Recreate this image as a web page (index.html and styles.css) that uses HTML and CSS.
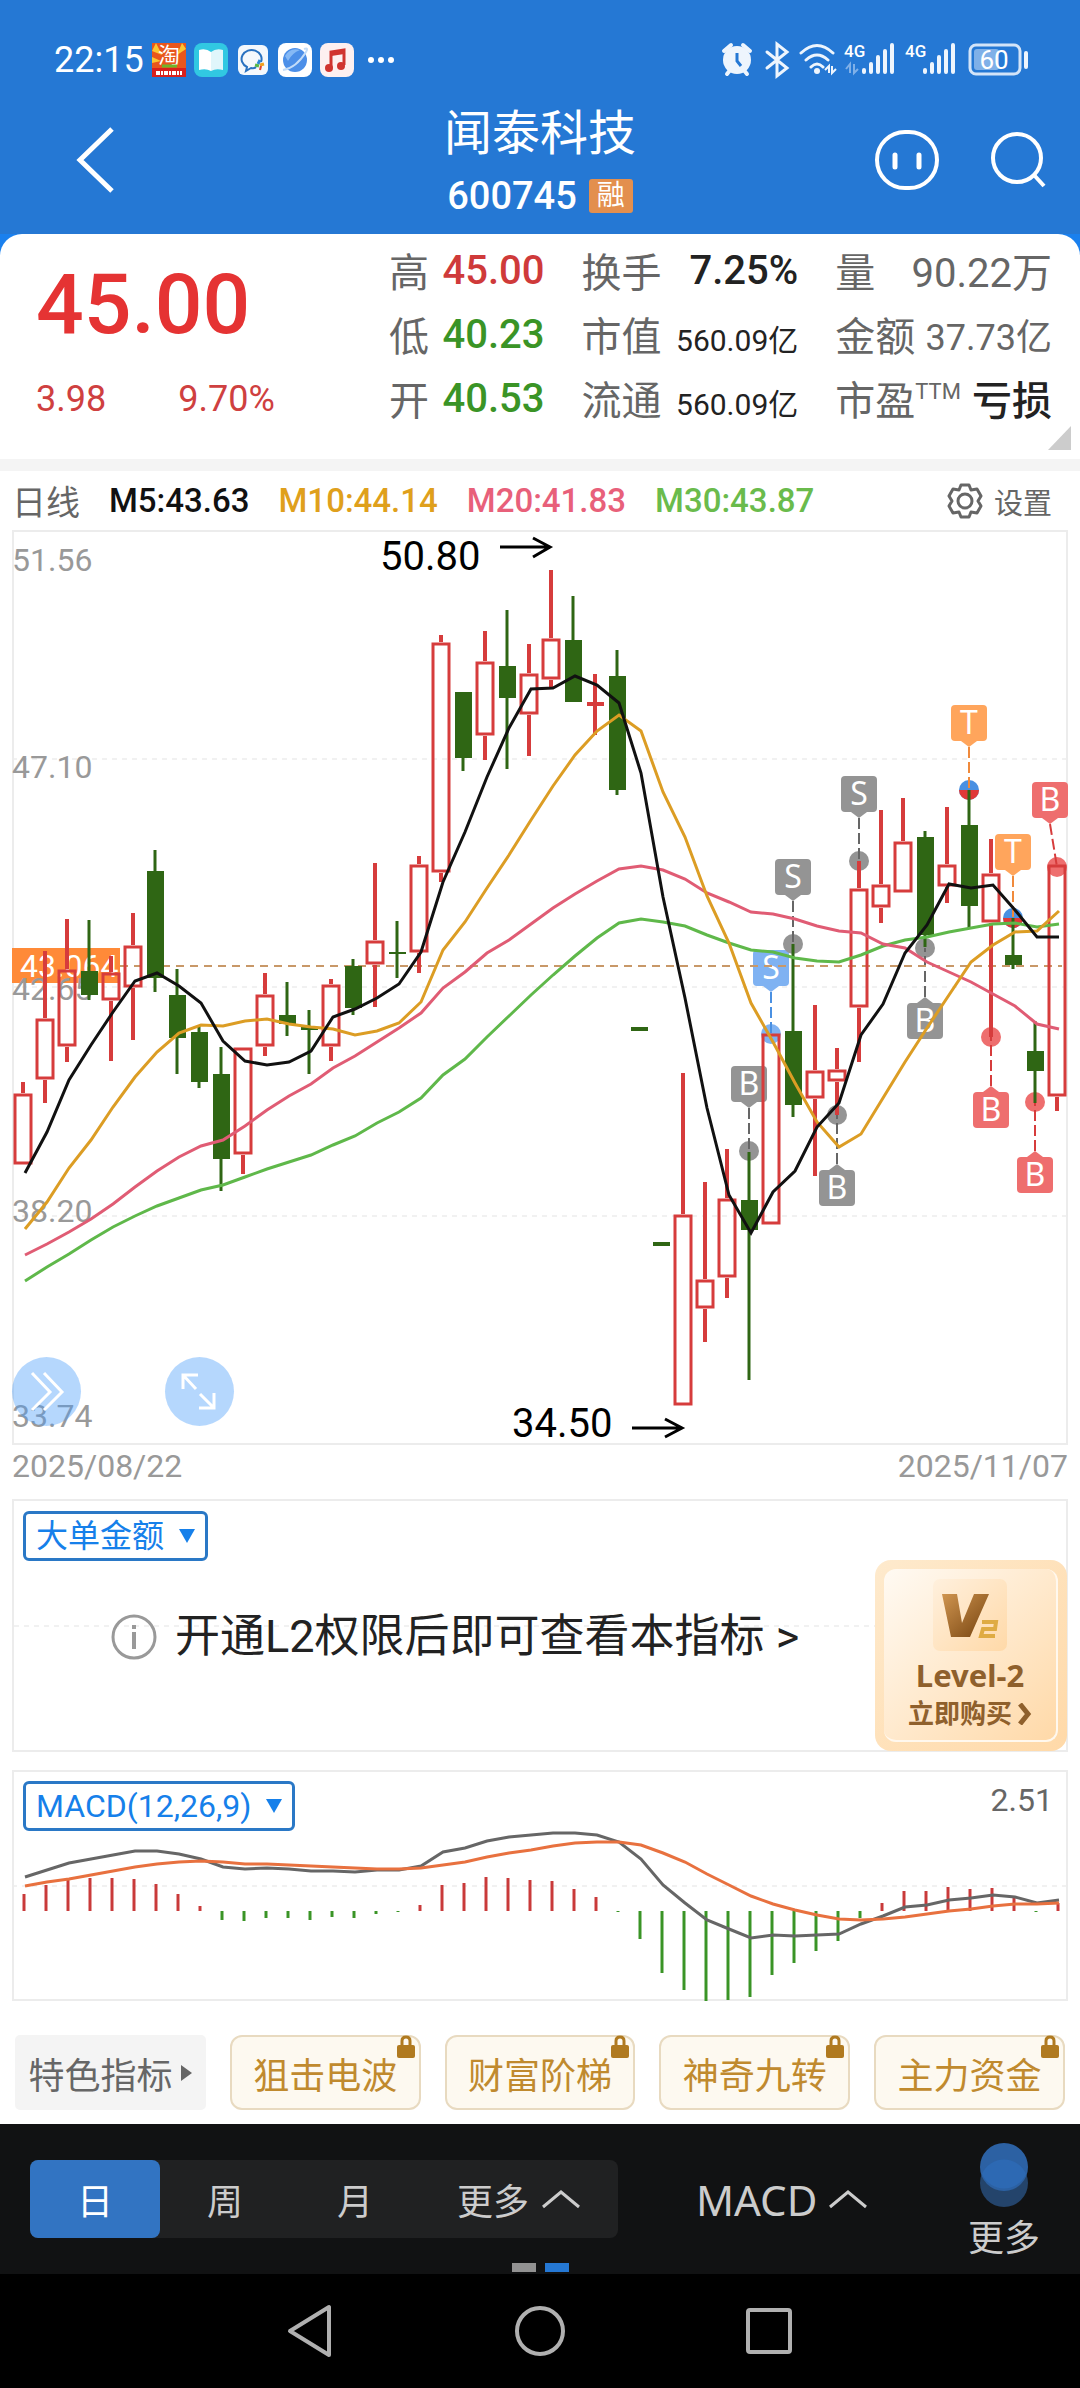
FILE: index.html
```html
<!DOCTYPE html>
<html lang="zh-CN">

<head>
  <meta charset="UTF-8" />
  <meta name="viewport" content="width=device-width, initial-scale=1.0" />
  <title>闻泰科技 600745</title>
  <link rel="stylesheet" href="styles.css">
</head>

<body>
  <header class="header">
    <!-- 状态栏 -->
    <div class="status">
      <div class="status-left">
        <span class="time">22:15</span>
        <svg class="app-icon" viewBox="0 0 34 34">
          <rect width="34" height="34" fill="#e8561c" />
          <path d="M0 8L10 12L4 0ZM34 6L25 12L30 0ZM0 20L9 18L0 14Z" fill="#fbc531" />
          <rect y="25" width="34" height="9" fill="#d9201c" />
          <text x="17" y="20" text-anchor="middle" font-size="22" fill="#fff">淘</text>
          <path d="M10 23h15" stroke="#6fb52c" stroke-width="3" />
          <path d="M4 30h26" stroke="#fff" stroke-width="4" stroke-dasharray="4 1 2 1" />
        </svg>
        <svg class="app-icon" viewBox="0 0 34 34">
          <rect width="34" height="34" rx="8" fill="#31c8e2" />
          <path d="M5 7q7-2 12 2v19q-5-3-12-1z" fill="#fff" />
          <path d="M29 7q-7-2-12 2v19q5-3 12-1z" fill="#e0f6fb" />
        </svg>
        <svg class="app-icon" viewBox="0 0 34 34">
          <rect x="2" y="2" width="30" height="30" rx="6" fill="#f4f8fc" />
          <path d="M25 19A10 9 0 1 0 11 24L10 28L15 25Q18 26 20 24" fill="none" stroke="#2a72c0" stroke-width="2" />
          <path d="M24 17l-2 4" stroke="#2a86d8" stroke-width="3" />
          <path d="M28 21l-4 1" stroke="#f0a020" stroke-width="3" />
          <path d="M24 27l1-4" stroke="#e2462c" stroke-width="2" />
          <path d="M19 22l4 1" stroke="#57b847" stroke-width="3" />
        </svg>
        <svg class="app-icon" viewBox="0 0 34 34">
          <rect width="34" height="34" rx="8" fill="#fff" />
          <circle cx="17" cy="17" r="12" fill="#4c8fe8" />
          <path d="M7 13Q12 4 22 7Q14 10 10 18Z" fill="#86b9f5" />
          <path d="M5 27Q18 25 28 9Q31 4 26 6" fill="none" stroke="#c3dcf8" stroke-width="2" />
        </svg>
        <svg class="app-icon" viewBox="0 0 34 34">
          <rect width="34" height="34" rx="8" fill="#fdf0f0" />
          <path d="M11 25V9L24 7V22" fill="none" stroke="#d0342f" stroke-width="3" />
          <path d="M11 11L24 9" stroke="#d0342f" stroke-width="4" />
          <circle cx="9" cy="25" r="4" fill="#d0342f" />
          <circle cx="21" cy="23" r="4" fill="#d0342f" />
        </svg>
        <svg class="dots" viewBox="0 0 26 6">
          <circle cx="3" cy="3" r="3" /><circle cx="13" cy="3" r="3" /><circle cx="23" cy="3" r="3" />
        </svg>
      </div>
      <svg class="status-right" viewBox="720 40 312 40">
        <!-- 闹钟 -->
        <circle cx="737" cy="60" r="14" fill="#eef5fd" />
        <path d="M724 51L731 45M750 51L743 45M727 74L731 69M747 74L743 69" class="sl" />
        <path d="M737 53V61L741 66" fill="none" stroke="#2578d4" stroke-width="3" />
        <!-- 蓝牙 -->
        <path d="M767 52L787 68L777 76V44L787 52L767 68" class="sl thin" />
        <!-- wifi -->
        <path d="M801 53Q817 38 833 53M806 60Q817 50 828 60M811 67Q817 61 823 67" class="sl thin" />
        <circle cx="817" cy="71" r="3" fill="#eef5fd" />
        <path d="M829 73V66L825 70M832 66V73L836 69" fill="none" stroke="#eef5fd" stroke-width="2" />
        <!-- 信号 -->
        <g class="sim">
          <text x="844" y="57">4G</text>
          <text x="905" y="57">4G</text>
        </g>
        <path d="M850 73V64L846 69M854 64V73L858 69" fill="none" stroke="#7fb0e8" stroke-width="2" />
        <path d="M864 70V72M871 64V72M878 57V72M885 51V72M892 45V72M925 70V72M932 64V72M939 57V72M946 51V72M953 45V72" class="sl" />
        <!-- 电池 -->
        <rect x="970" y="45" width="50" height="29" rx="6" fill="none" stroke="#d3e4f8" stroke-width="3" />
        <rect x="974" y="49" width="25" height="21" rx="3" fill="#7fb0e8" />
        <path d="M1026 53V67" class="sl" />
        <text x="994" y="69" text-anchor="middle" font-size="26" fill="#fff">60</text>
      </svg>
    </div>

    <div class="title-bar">
      <button class="icon-btn back" aria-label="返回">
        <svg width="40" height="66" viewBox="0 0 40 66"><path d="M36 2L4 33L36 64" fill="none" stroke="#fff" stroke-width="5" /></svg>
      </button>
      <div class="title">
        <h1>闻泰科技</h1>
        <p><span>600745</span><i class="badge">融</i></p>
      </div>
      <div class="title-actions">
        <button class="icon-btn" aria-label="助手">
          <svg width="66" height="62" viewBox="0 0 66 62">
            <rect x="3" y="3" width="60" height="56" rx="28" fill="none" stroke="#fff" stroke-width="4" />
            <path d="M21 26V38M45 26V38" stroke="#fff" stroke-width="5" stroke-linecap="round" />
          </svg>
        </button>
        <button class="icon-btn" aria-label="搜索">
          <svg width="58" height="58" viewBox="0 0 58 58">
            <circle cx="27" cy="27" r="24" fill="none" stroke="#fff" stroke-width="4" />
            <path d="M44 44L54 55" stroke="#fff" stroke-width="4" />
          </svg>
        </button>
      </div>
    </div>
  </header>

  <main>
    <div class="quote-wrap">
      <section class="quote">
        <div class="price">
          <strong>45.00</strong>
          <p><span>3.98</span><span>9.70%</span></p>
        </div>
        <dl class="stats">
          <div><dt>高</dt><dd class="up">45.00</dd></div>
          <div><dt>换手</dt><dd>7.25%</dd></div>
          <div><dt>量</dt><dd class="gray">90.22万</dd></div>
          <div><dt>低</dt><dd class="down">40.23</dd></div>
          <div><dt>市值</dt><dd class="small">560.09亿</dd></div>
          <div><dt>金额</dt><dd class="gray mid">37.73亿</dd></div>
          <div><dt>开</dt><dd class="down">40.53</dd></div>
          <div><dt>流通</dt><dd class="small">560.09亿</dd></div>
          <div><dt>市盈<sup>TTM</sup></dt><dd>亏损</dd></div>
        </dl>
        <i class="corner"></i>
      </section>
    </div>

    <div class="ma-bar">
      <span class="period">日线</span>
      <span class="ma5">M5:43.63</span>
      <span class="ma10">M10:44.14</span>
      <span class="ma20">M20:41.83</span>
      <span class="ma30">M30:43.87</span>
      <button class="setting">
        <svg width="38" height="38" viewBox="0 0 38 38" fill="none" stroke="#666" stroke-width="3">
          <path d="M15 3H23L25 8L31 7L35 14L32 19L35 24L31 31L25 30L23 35H15L13 30L7 31L3 24L6 19L3 14L7 7L13 8Z" stroke-linejoin="round" />
          <circle cx="19" cy="19" r="7" />
        </svg>
        设置
      </button>
    </div>

    <section class="kline">
      <svg id="kline" class="chart" viewBox="12 530 1056 915"></svg>
      <div class="kline-tools">
        <button aria-label="展开">
          <svg width="69" height="69" viewBox="0 0 69 69"><path d="M20 16L38 35L20 53M32 16L50 35L32 53" /></svg>
        </button>
        <button aria-label="全屏">
          <svg width="69" height="69" viewBox="0 0 69 69"><path d="M18 32V18H33M18 18L31 32M35 37L49 51M34 51H49V36" /></svg>
        </button>
      </div>
    </section>
    <div class="dates"><span>2025/08/22</span><span>2025/11/07</span></div>

    <section class="panel l2">
      <label class="picker">
        <select aria-label="指标"><option>大单金额</option></select>
        <svg width="16" height="14" viewBox="0 0 16 14"><path d="M0 0H16L8 14Z" /></svg>
      </label>
      <a class="l2-tip" href="#">
        <svg width="46" height="46" viewBox="0 0 46 46" fill="none" stroke="#999" stroke-width="3">
          <circle cx="23" cy="23" r="21" />
          <path d="M23 18V35M23 11V15" stroke-width="4" />
        </svg>
        <span>开通L2权限后即可查看本指标 &gt;</span>
      </a>
      <a class="l2-card" href="#">
        <span class="l2-inner">
          <svg width="74" height="72" viewBox="0 0 74 72">
            <defs>
              <linearGradient id="tile" x1="0" y1="0" x2="1" y2="1"><stop offset="0" stop-color="#fff0dd" /><stop offset="1" stop-color="#ffd9a8" /></linearGradient>
              <linearGradient id="vee" x1="0" y1="0" x2="1" y2="1"><stop offset="0" stop-color="#d09550" /><stop offset="1" stop-color="#75430f" /></linearGradient>
            </defs>
            <rect width="74" height="72" rx="7" fill="url(#tile)" />
            <path d="M9 15H24L29 44L41 15H56L37 58H18Z" fill="url(#vee)" />
            <path d="M49 43H63L62 50H50L48 57H62" fill="none" stroke="#dfab43" stroke-width="4" />
          </svg>
          <b>Level-2</b>
          <em>立即购买<svg width="14" height="22" viewBox="0 0 14 22"><path d="M2 1L10 11L2 21" fill="none" stroke="#8f602c" stroke-width="5" /></svg></em>
        </span>
      </a>
    </section>

    <section class="panel macd">
      <svg id="macd" class="chart" viewBox="12 1770 1056 231"></svg>
      <div class="macd-head">
        <label class="picker">
          <select aria-label="副图指标"><option>MACD(12,26,9)</option></select>
          <svg width="16" height="14" viewBox="0 0 16 14"><path d="M0 0H16L8 14Z" /></svg>
        </label>
        <span>2.51</span>
      </div>
    </section>

    <div class="chips">
      <button class="chip plain">特色指标<i></i></button>
      <button class="chip">狙击电波<svg class="lock" viewBox="0 0 18 23"><path d="M5 10V6Q5 2 9 2T13 6V10" /><rect y="10" width="18" height="13" rx="2" /></svg></button>
      <button class="chip">财富阶梯<svg class="lock" viewBox="0 0 18 23"><path d="M5 10V6Q5 2 9 2T13 6V10" /><rect y="10" width="18" height="13" rx="2" /></svg></button>
      <button class="chip">神奇九转<svg class="lock" viewBox="0 0 18 23"><path d="M5 10V6Q5 2 9 2T13 6V10" /><rect y="10" width="18" height="13" rx="2" /></svg></button>
      <button class="chip">主力资金<svg class="lock" viewBox="0 0 18 23"><path d="M5 10V6Q5 2 9 2T13 6V10" /><rect y="10" width="18" height="13" rx="2" /></svg></button>
    </div>
  </main>

  <footer>
    <div class="toolbar">
      <div class="tool-row">
        <div class="segment">
          <button class="on">日</button>
          <button>周</button>
          <button>月</button>
          <button class="wide">更多<svg width="40" height="20" viewBox="0 0 40 20"><path d="M2 18L20 3L38 18" /></svg></button>
        </div>
        <button class="tool-macd">MACD<svg width="40" height="20" viewBox="0 0 40 20"><path d="M2 18L20 3L38 18" /></svg></button>
        <button class="tool-more">
          <svg width="48" height="64" viewBox="0 0 48 64">
            <circle cx="24" cy="40" r="24" fill="#24446b" />
            <circle cx="24" cy="24" r="24" fill="#2c61a3" />
            <path d="M2 31A24 24 0 0 1 46 31A24 24 0 0 1 2 31Z" fill="#2d69b3" />
          </svg>
          更多
        </button>
      </div>
      <div class="pager"><i></i><i class="on"></i></div>
    </div>
    <nav class="sys-nav">
      <button aria-label="后退"><svg width="50" height="54" viewBox="0 0 50 54"><path d="M4 27L43 3V51Z" /></svg></button>
      <button aria-label="主屏幕"><svg width="50" height="54" viewBox="0 0 50 54"><circle cx="25" cy="27" r="23" /></svg></button>
      <button aria-label="最近任务"><svg width="50" height="54" viewBox="0 0 50 54"><rect x="4" y="6" width="42" height="42" rx="2" /></svg></button>
    </nav>
  </footer>

  <script src="chart.js"></script>
</body>

</html>
```

FILE: styles.css
```css
* {
  box-sizing: border-box;
}

body {
  margin: 0;
  background-color: #fff;
  color: #222;
  font-family: Roboto, "Noto Sans CJK SC", sans-serif;
}

h1,
p,
dl,
dd {
  margin: 0;
}

i,
em {
  font-style: normal;
}

a {
  color: inherit;
  text-decoration: none;
}

button {
  padding: 0;
  border: 0;
  background: none;
  color: inherit;
  font: inherit;
}

svg {
  display: block;
  flex-shrink: 0;
}

/* 头部 */
.header {
  height: 234px;
  padding-top: 40px;
  background-color: #2578d4;
  color: #fff;
}

.status {
  display: flex;
  justify-content: space-between;
  align-items: center;
  height: 40px;
  padding: 0 48px 0 54px;
}

.status-left {
  display: flex;
  align-items: center;
  gap: 8px;
}

.time {
  font-size: 36px;
}

.app-icon {
  width: 34px;
  height: 34px;
}

.dots {
  width: 26px;
  margin-left: 6px;
  fill: #fff;
}

.status-right {
  width: 312px;
}

.sl {
  fill: none;
  stroke: #eef5fd;
  stroke-width: 4;
  stroke-linecap: round;
}

.thin {
  stroke-width: 3;
}

.sim {
  fill: #fff;
  font-size: 17px;
  font-weight: 500;
}

.title-bar {
  display: grid;
  grid-template-columns: 1fr auto 1fr;
  align-items: center;
  height: 146px;
  padding: 12px 32px 0 76px;
}

.icon-btn {
  display: block;
}

.title {
  margin-left: -44px;
  padding-top: 12px;
  text-align: center;
}

.title h1 {
  font-size: 48px;
  font-weight: 400;
  line-height: 60px;
}

.title p {
  display: flex;
  align-items: center;
  justify-content: center;
  gap: 12px;
  height: 64px;
  font-size: 38px;
  font-weight: 500;
}

.badge {
  width: 44px;
  border-radius: 3px;
  background-color: #e38f4e;
  font-size: 28px;
  font-weight: 400;
  line-height: 34px;
}

.title-actions {
  display: flex;
  justify-content: flex-end;
  align-items: center;
  gap: 50px;
}

/* 行情 */
.quote-wrap {
  background-color: #1a80ee;
}

.quote {
  position: relative;
  display: flex;
  height: 225px;
  padding: 4px 28px 0 36px;
  border-radius: 22px 22px 0 0;
  background-color: #fff;
}

.price {
  width: 353px;
  color: #e53333;
}

.price strong {
  display: block;
  padding-top: 17px;
  font-size: 84px;
  font-weight: 500;
  line-height: 100px;
}

.price p {
  display: flex;
  gap: 72px;
  margin-top: 22px;
  color: #cf4040;
  font-size: 36px;
  line-height: 44px;
}

.stats {
  flex: 1;
  display: grid;
  grid-template-columns: 155fr 216fr 216fr;
  grid-auto-rows: 64px;
  column-gap: 37px;
}

.stats div {
  display: flex;
  justify-content: space-between;
  align-items: center;
  font-size: 40px;
  white-space: nowrap;
}

.stats dt {
  color: #666;
}

.stats sup {
  font-size: 22px;
  line-height: 0;
  vertical-align: 16px;
}

.stats dd {
  font-weight: 500;
}

.stats .up {
  color: #cf3a3a;
}

.stats .down {
  color: #3a9426;
}

.stats .small {
  padding-top: 8px;
  font-size: 30px;
  font-weight: 400;
}

.stats .gray {
  color: #666;
  font-weight: 400;
}

.stats .mid {
  font-size: 36px;
}

.corner {
  position: absolute;
  right: 9px;
  bottom: 9px;
  border-left: 23px solid transparent;
  border-bottom: 24px solid #ccc;
}

.ma-bar {
  display: flex;
  align-items: center;
  gap: 29px;
  height: 71px;
  padding: 0 28px 0 12px;
  border-top: 12px solid #f4f4f4;
  font-size: 33px;
  font-weight: 500;
}

.period {
  color: #666;
  font-size: 34px;
  font-weight: 400;
}

.ma5 {
  color: #111;
}

.ma10 {
  color: #dfa01c;
}

.ma20 {
  color: #e8607a;
}

.ma30 {
  color: #6abb4c;
}

.setting {
  display: flex;
  align-items: center;
  gap: 10px;
  margin-left: auto;
  color: #666;
  font-size: 29px;
  font-weight: 400;
}

/* K线 */
.kline {
  position: relative;
  padding: 0 12px;
}

.chart {
  width: 100%;
  overflow: visible;
}

.frame {
  fill: none;
  stroke: #ececec;
  stroke-width: 2;
}

.grid {
  fill: none;
  stroke: #f1f1f1;
  stroke-width: 2;
  stroke-dasharray: 5 5;
}

.axis {
  fill: #999;
  font-size: 32px;
}

.mark {
  font-size: 40px;
}

.arrow {
  fill: none;
  stroke: #000;
  stroke-width: 3;
}

.cost {
  fill: none;
  stroke: #c89868;
  stroke-width: 2;
  stroke-dasharray: 8 6;
}

.tag-text {
  fill: #fff;
  font-family: "Noto Sans", sans-serif;
  font-size: 32px;
}

.kline-tools {
  position: absolute;
  left: 12px;
  bottom: 19px;
  display: flex;
  gap: 84px;
}

.kline-tools button {
  border-radius: 50%;
  background-color: rgba(70, 155, 250, 0.4);
}

.kline-tools path {
  fill: none;
  stroke: #fff;
  stroke-width: 3;
}

.dates {
  display: flex;
  justify-content: space-between;
  height: 54px;
  padding: 0 12px;
  color: #999;
  font-size: 32px;
  line-height: 42px;
}

/* 指标面板 */
.panel {
  position: relative;
  margin: 0 12px 18px;
}

.l2 {
  height: 253px;
  border: 2px solid #ececec;
  padding: 10px 0 0 9px;
  background: repeating-linear-gradient(90deg, #f1f1f1 0 5px, #fff 5px 10px) 0 50% / 100% 2px no-repeat;
}

.picker {
  position: relative;
  display: inline-flex;
  align-items: center;
}

.picker select {
  height: 50px;
  padding: 0 40px 0 10px;
  border: 3px solid #2a78c6;
  border-radius: 6px;
  appearance: none;
  background-color: #fff;
  color: #1680ea;
  font: inherit;
  font-size: 32px;
}

.picker svg {
  position: absolute;
  right: 13px;
  fill: #1680ea;
}

.l2-tip {
  display: flex;
  align-items: center;
  gap: 18px;
  padding: 46px 0 0 88px;
  font-size: 45px;
  line-height: 60px;
}

.l2-card {
  position: absolute;
  right: -1px;
  bottom: -1px;
  width: 192px;
  padding: 9px;
  border-radius: 16px;
  background: linear-gradient(135deg, #feeacd, #ffd9a8);
  color: #8f602c;
}

.l2-inner {
  display: flex;
  flex-direction: column;
  align-items: center;
  height: 173px;
  padding-top: 10px;
  border-right: 2px solid #fff8ee;
  border-bottom: 2px solid #fff8ee;
  border-radius: 12px;
  background: linear-gradient(135deg, #fffaf3, #ffd9a8);
}

.l2-inner b {
  margin-top: 3px;
  font-family: "Noto Sans", sans-serif;
  font-size: 31px;
  line-height: 42px;
}

.l2-inner em {
  display: flex;
  align-items: center;
  gap: 6px;
  font-size: 26px;
  font-weight: 700;
  line-height: 36px;
}

.macd {
  margin-bottom: 34px;
}

.macd-head {
  position: absolute;
  top: 11px;
  left: 11px;
  right: 15px;
  display: flex;
  justify-content: space-between;
  color: #666;
  font-size: 32px;
}

/* 特色指标 */
.chips {
  display: flex;
  gap: 24px;
  padding: 0 15px 14px;
}

.chip {
  position: relative;
  flex: 1;
  height: 75px;
  border: 2px solid #e8dac0;
  border-radius: 12px;
  background-color: #fdf9f0;
  color: #c08a2e;
  font-size: 36px;
}

.plain {
  display: flex;
  align-items: center;
  justify-content: center;
  gap: 9px;
  border-color: #f4f4f4;
  border-radius: 5px;
  background-color: #f4f4f4;
  color: #666;
}

.plain i {
  border: 8px solid transparent;
  border-left: 11px solid #666;
  border-right: 0;
}

.lock {
  position: absolute;
  top: -2px;
  right: 4px;
  width: 18px;
  fill: #b07a20;
}

.lock path {
  fill: none;
  stroke: #b07a20;
  stroke-width: 3;
}

/* 底部 */
.toolbar {
  height: 150px;
  background-color: #111213;
  color: #ccc;
  font-size: 36px;
}

.toolbar svg path {
  stroke: #ccc;
  stroke-width: 3;
  fill: none;
}

.tool-row {
  display: flex;
  align-items: center;
  height: 139px;
  padding: 11px 40px 0 30px;
}

.segment {
  display: flex;
  border-radius: 8px;
  background-color: #202122;
}

.segment button {
  display: flex;
  align-items: center;
  justify-content: center;
  gap: 12px;
  width: 130px;
  height: 78px;
}

.segment .on {
  border-radius: 8px;
  background-color: #3274c2;
  color: #fff;
}

.segment .wide {
  width: 198px;
}

.tool-macd {
  display: flex;
  align-items: center;
  gap: 11px;
  margin-left: 78px;
  font-family: "Noto Sans", sans-serif;
  font-size: 42px;
}

.toolbar .tool-more path {
  fill: #2d69b3;
  stroke: none;
}

.tool-more {
  display: flex;
  flex-direction: column;
  align-items: center;
  gap: 6px;
  margin-left: auto;
  padding-top: 10px;
  line-height: 52px;
}

.pager {
  display: flex;
  justify-content: center;
  gap: 9px;
}

.pager i {
  width: 24px;
  height: 9px;
  background-color: #929292;
}

.pager .on {
  background-color: #2578d4;
}

.sys-nav {
  display: flex;
  justify-content: center;
  align-items: center;
  gap: 179px;
  height: 114px;
  background-color: #000;
}

.sys-nav svg {
  fill: none;
  stroke: #b0b0b0;
  stroke-width: 4;
  stroke-linejoin: round;
}
```

FILE: chart.js
```js
// [最高, 实体上沿, 实体下沿, 最低, 涨1/跌0]，均为画布 y 坐标
const candles = [
  [1082, 1093, 1165, 1165, 1], [951, 1018, 1080, 1103, 1], [919, 969, 1047, 1062, 1], [920, 971, 995, 1000, 0],
  [956, 972, 1001, 1061, 1], [913, 945, 988, 1040, 1], [850, 871, 978, 992, 0], [969, 995, 1038, 1074, 0],
  [1025, 1032, 1082, 1088, 0], [1047, 1074, 1159, 1191, 0], [1047, 1047, 1155, 1174, 1], [973, 994, 1047, 1056, 1],
  [982, 1015, 1024, 1036, 0], [1010, 1027, 1030, 1074, 0], [979, 984, 1047, 1061, 1], [959, 966, 1008, 1015, 0],
  [863, 940, 965, 1007, 1], [921, 952, 954, 978, 0], [856, 864, 953, 973, 1], [635, 642, 873, 882, 1],
  [692, 692, 758, 771, 0], [631, 661, 736, 760, 1], [610, 666, 698, 769, 0], [644, 673, 715, 756, 1],
  [570, 638, 680, 687, 1], [596, 640, 702, 702, 0], [674, 703, 705, 735, 1], [650, 676, 790, 795, 0],
  [1027, 1027, 1031, 1031, 0], [1242, 1242, 1246, 1246, 0], [1073, 1214, 1406, 1406, 1], [1182, 1279, 1309, 1342, 1],
  [1149, 1198, 1278, 1298, 1], [1152, 1200, 1230, 1380, 0], [1033, 1033, 1225, 1225, 1], [944, 1031, 1105, 1117, 0],
  [1005, 1070, 1099, 1176, 1], [1048, 1069, 1082, 1115, 1], [861, 888, 1008, 1062, 1], [810, 884, 908, 923, 1],
  [798, 841, 893, 893, 1], [831, 837, 935, 947, 0], [807, 864, 887, 903, 1], [790, 825, 906, 928, 0],
  [839, 873, 923, 1037, 1], [918, 955, 965, 969, 0], [1021, 1051, 1071, 1103, 0], [864, 864, 1097, 1111, 1]
];

const ma = {
  '#5fb84a': [1281, 1267, 1254, 1240, 1227, 1216, 1206, 1198, 1190, 1185, 1177, 1169, 1162, 1155, 1145, 1136, 1123, 1112, 1098, 1075, 1059, 1037, 1016, 995, 975, 956, 938, 923, 919, 922, 926, 935, 943, 950, 952, 958, 961, 962, 955, 946, 940, 937, 932, 928, 924, 923, 927, 924],
  '#e05c74': [1255, 1244, 1232, 1219, 1204, 1187, 1171, 1157, 1146, 1140, 1126, 1110, 1096, 1084, 1068, 1056, 1042, 1028, 1013, 988, 972, 953, 940, 924, 908, 894, 881, 869, 866, 870, 879, 893, 902, 912, 914, 919, 926, 931, 933, 944, 948, 962, 972, 982, 994, 1006, 1024, 1029],
  '#dc9d24': [1229, 1202, 1168, 1140, 1107, 1077, 1052, 1033, 1025, 1026, 1021, 1019, 1024, 1027, 1029, 1035, 1031, 1023, 1002, 950, 922, 888, 855, 820, 786, 755, 731, 715, 731, 792, 837, 896, 943, 1003, 1042, 1083, 1122, 1147, 1134, 1098, 1062, 1028, 995, 962, 945, 932, 931, 911],
  '#111': [1173, 1132, 1080, 1045, 1012, 981, 973, 986, 1003, 1041, 1061, 1065, 1062, 1051, 1017, 1009, 998, 984, 952, 882, 832, 777, 728, 689, 688, 676, 685, 703, 773, 897, 998, 1108, 1195, 1233, 1192, 1171, 1127, 1103, 1035, 1004, 953, 925, 884, 888, 885, 910, 937, 937]
};

// 买卖点: [序号, 字母, 标签框 x, 标签框 y, 圆点 y, 颜色, 虚线颜色]
const GRAY = '#949494';
const RED = '#ee6e6e';
const BLUE = '#7fb2f2';
const ORANGE = '#ffa55c';
const tags = [
  [33, 'B', 731, 1066, 1151, GRAY, '#666'], [34, 'S', 753, 950, 1034, BLUE, '#4a90e2'],
  [35, 'S', 775, 859, 944, GRAY, '#666'], [37, 'B', 819, 1170, 1115, GRAY, '#666'],
  [38, 'S', 841, 776, 861, GRAY, '#666'], [41, 'B', 907, 1003, 948, GRAY, '#666'],
  [43, 'T', 951, 705, 790, ORANGE, '#f08a3c'], [44, 'B', 973, 1092, 1037, RED, '#d63c3c'],
  [45, 'T', 995, 834, 918, ORANGE, '#f08a3c'], [46, 'B', 1017, 1157, 1102, RED, '#d63c3c'],
  [47, 'B', 1032, 782, 867, RED, '#d63c3c']
];

// MACD 柱的端点和两条线
const bars = [1894, 1885, 1880, 1878, 1878, 1879, 1884, 1894, 1906, 1920, 1921, 1918, 1918, 1920, 1917, 1918, 1914, 1912, 1905, 1885, 1883, 1877, 1878, 1880, 1881, 1889, 1897, 1912, 1939, 1973, 1990, 2001, 2000, 1997, 1975, 1963, 1951, 1941, 1918, 1903, 1891, 1891, 1887, 1889, 1888, 1897, 1912, 1903];
const dif = [1877, 1870, 1863, 1859, 1855, 1851, 1851, 1854, 1859, 1867, 1869, 1868, 1869, 1871, 1871, 1872, 1870, 1870, 1866, 1852, 1848, 1841, 1837, 1835, 1833, 1833, 1835, 1842, 1859, 1885, 1903, 1920, 1929, 1938, 1935, 1936, 1935, 1934, 1924, 1916, 1907, 1905, 1900, 1898, 1895, 1897, 1903, 1900];
const dea = [1886, 1882, 1879, 1875, 1871, 1867, 1864, 1862, 1861, 1862, 1864, 1864, 1865, 1866, 1867, 1868, 1869, 1869, 1868, 1865, 1862, 1857, 1853, 1850, 1846, 1843, 1842, 1842, 1845, 1853, 1862, 1874, 1885, 1896, 1904, 1910, 1915, 1919, 1920, 1919, 1917, 1914, 1911, 1909, 1906, 1904, 1904, 1903];

const xOf = (i) => 23 + 22 * i;

function polyline(list, color, width) {
  const points = list.map((y, i) => `${xOf(i) + 2},${y}`).join(' ');
  return `<polyline points="${points}" fill="none" stroke="${color}" stroke-width="${width}"/>`;
}

function drawTag([i, letter, bx, by, dot, color, line]) {
  const x = xOf(i);
  const cx = bx + 18;
  const below = by > dot;
  const edge = below ? by : by + 36;
  const tip = below ? edge - 6 : edge + 6;
  let html = `<circle cx="${x}" cy="${dot}" r="10" fill="${letter === 'T' ? '#4a90e2' : color}"/>`;
  if (letter === 'T') {
    html += `<path d="M${x - 10} ${dot}A10 10 0 0 0 ${x + 10} ${dot}Z" fill="#e03838"/>`;
  }
  html += `<path d="M${cx} ${tip}L${x} ${dot}" stroke="${line}" stroke-width="2" stroke-dasharray="11 4"/>`;
  html += `<rect x="${bx}" y="${by}" width="36" height="36" rx="4" fill="${color}"/>`;
  html += `<path d="M${cx - 8} ${edge}L${cx} ${tip}L${cx + 8} ${edge}Z" fill="${color}"/>`;
  html += `<text class="tag-text" x="${cx}" y="${by + 29}" text-anchor="middle">${letter}</text>`;
  return html;
}

function drawCandle([high, top, bottom, low, up], i) {
  const x = xOf(i);
  if (!up) {
    return `<path d="M${x} ${high}V${low}" stroke="#2f6614" stroke-width="3"/>
      <rect x="${x - 8}" y="${top}" width="17" height="${bottom - top}" fill="#2f6614"/>`;
  }
  if (bottom - top < 4) {
    return `<path d="M${x} ${high}V${low}M${x - 8} ${top + 1}H${x + 9}" stroke="#d63c3c" stroke-width="4"/>`;
  }
  return `<path d="M${x} ${high}V${top}M${x} ${bottom}V${low}" stroke="#d63c3c" stroke-width="4"/>
    <rect x="${x - 8}" y="${top + 2}" width="16" height="${bottom - top - 4}" fill="none" stroke="#d63c3c" stroke-width="3"/>`;
}

function drawKline() {
  let html = '<path class="grid" d="M12 759H1068M12 987H1068M12 1216H1068"/>';
  html += '<rect class="frame" x="13" y="531" width="1054" height="913"/>';
  html += '<rect x="12" y="948" width="108" height="35" fill="#ff8a38"/>';
  html += '<text x="20" y="977" font-size="32" fill="#fff">43.064</text>';
  html += '<text class="axis" x="12" y="571">51.56</text><text class="axis" x="12" y="778">47.10</text>';
  html += '<text class="axis" x="12" y="1000">42.65</text><text class="axis" x="12" y="1222">38.20</text>';
  html += '<text class="axis" x="12" y="1427">33.74</text>';
  html += tags.map(drawTag).join('');
  html += '<path class="cost" d="M120 966H1062"/>';
  html += candles.map(drawCandle).join('');
  for (const color in ma) {
    html += polyline(ma[color], color, 3);
  }
  html += '<text class="mark" x="380" y="570">50.80</text><path class="arrow" d="M500 547H550M533 538L550 547L533 557"/>';
  html += '<text class="mark" x="512" y="1437">34.50</text><path class="arrow" d="M632 1428H682M665 1419L682 1428L665 1437"/>';
  document.getElementById('kline').innerHTML = html;
}

function drawMacd() {
  let html = '<path class="grid" d="M12 1886H1068"/><rect class="frame" x="13" y="1771" width="1054" height="229"/>';
  bars.forEach((y, i) => {
    html += `<path d="M${xOf(i) + 1} 1911V${y}" stroke="${y < 1911 ? '#c93a3a' : '#3a9426'}" stroke-width="3"/>`;
  });
  html += polyline(dif, '#666', 3) + polyline(dea, '#e8713f', 3);
  document.getElementById('macd').innerHTML = html;
}

drawKline();
drawMacd();
```
